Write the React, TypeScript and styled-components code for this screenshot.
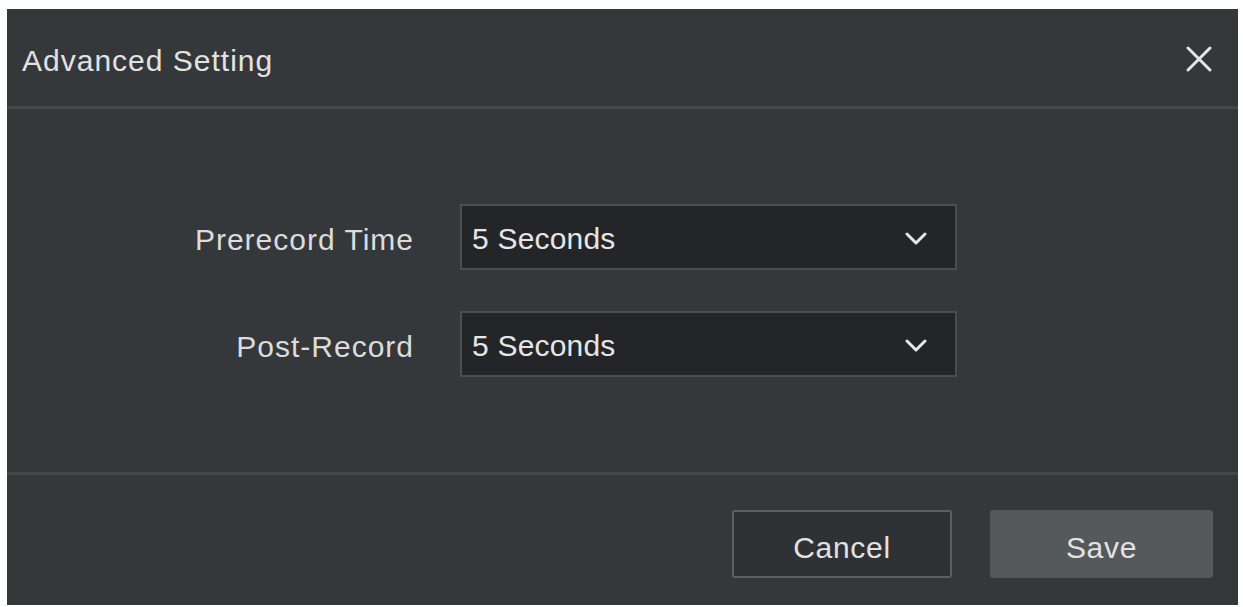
import React from "react";
import styled, { createGlobalStyle } from "styled-components";

const Global = createGlobalStyle`
  html, body { margin: 0; padding: 0; background: #ffffff; }
  body { font-family: "Liberation Sans", Arial, sans-serif; }
  * { box-sizing: border-box; }
`;

const Dialog = styled.div`
  margin: 9px 0 0 7px;
  width: 1231px;
  height: 596px;
  background: #35383b;
  display: flex;
  flex-direction: column;
  color: #e4e4e4;
`;

const Header = styled.div`
  height: 100px;
  display: flex;
  align-items: center;
  justify-content: space-between;
  padding: 2px 24px 0 15px;
  border-bottom: 3px solid #45484b;
`;

const Title = styled.div`
  font-size: 30px;
  color: #e2e2e2;
  letter-spacing: 1px;
  padding-top: 4px;
`;

const Close = styled.button`
  background: none;
  border: none;
  padding: 0;
  width: 30px;
  height: 30px;
  display: flex;
  align-items: center;
  justify-content: center;
  cursor: pointer;
`;

const Body = styled.div`
  flex: 1;
  display: flex;
  flex-direction: column;
  justify-content: center;
  padding-left: 157px;
  gap: 41px;
  border-bottom: 3px solid #45484b;
`;

const Row = styled.div`
  display: grid;
  grid-template-columns: 250px 497px;
  column-gap: 46px;
  align-items: center;
`;

const Label = styled.div`
  text-align: right;
  font-size: 30px;
  color: #dcdcdc;
  letter-spacing: 1px;
  padding-top: 5px;
`;

const Select = styled.div`
  height: 66px;
  background: #232528;
  border: 2px solid #4b4e51;
  display: flex;
  align-items: center;
  justify-content: space-between;
  padding: 4px 28px 0 10px;
  font-size: 30px;
  color: #e6e6e6;
  letter-spacing: 0.2px;
`;

const Footer = styled.div`
  flex: 0 0 130px;
  display: flex;
  justify-content: flex-end;
  align-items: flex-start;
  padding: 35px 25px 0 0;
  gap: 38px;
`;

const Button = styled.button<{ $primary?: boolean }>`
  width: ${(p) => (p.$primary ? "223px" : "220px")};
  height: 68px;
  border-radius: 3px;
  font-family: "Liberation Sans", Arial, sans-serif;
  font-size: 30px;
  letter-spacing: 0.7px;
  padding-top: 8px;
  color: #e2e2e2;
  background: ${(p) => (p.$primary ? "#56595c" : "#2f3235")};
  border: 2px solid ${(p) => (p.$primary ? "#56595c" : "#5d6063")};
  cursor: pointer;
`;

const Chevron = () => (
  <svg width="22" height="14" viewBox="0 0 22 14">
    <path d="M2 2 L11 11 L20 2" fill="none" stroke="#e8e8e8" strokeWidth="3" strokeLinecap="round" strokeLinejoin="round" />
  </svg>
);

const Field = ({ label, value }: { label: string; value: string }) => (
  <Row>
    <Label>{label}</Label>
    <Select>
      <span>{value}</span>
      <Chevron />
    </Select>
  </Row>
);

export default function App() {
  return (
    <>
      <Global />
      <Dialog>
        <Header>
          <Title>Advanced Setting</Title>
          <Close aria-label="Close">
            <svg width="28" height="28" viewBox="0 0 28 28">
              <path d="M3 3 L25 25 M25 3 L3 25" stroke="#e6e6e6" strokeWidth="3" strokeLinecap="round" />
            </svg>
          </Close>
        </Header>
        <Body>
          <Field label="Prerecord Time" value="5 Seconds" />
          <Field label="Post-Record" value="5 Seconds" />
        </Body>
        <Footer>
          <Button>Cancel</Button>
          <Button $primary>Save</Button>
        </Footer>
      </Dialog>
    </>
  );
}
